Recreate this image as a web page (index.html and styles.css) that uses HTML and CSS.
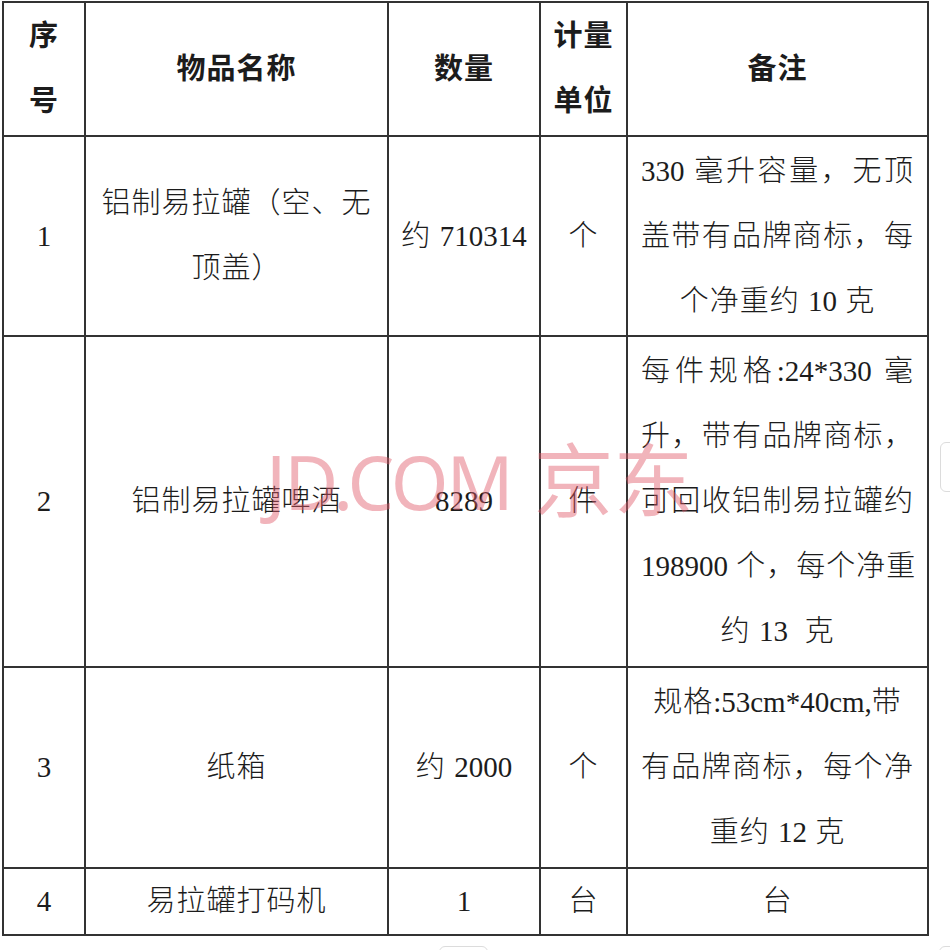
FILE: index.html
```html
<!DOCTYPE html>
<html lang="zh-CN">
<head>
<meta charset="utf-8">
<title>物品清单</title>
<link rel="stylesheet" href="styles.css">
</head>
<body>
<div class="page">
  <div class="tbl">
    <div class="c h"><div>序</div><div>号</div></div>
    <div class="c h">物品名称</div>
    <div class="c h">数量</div>
    <div class="c h"><div>计量</div><div>单位</div></div>
    <div class="c h">备注</div>

    <div class="c"><span class="n">1</span></div>
    <div class="c"><div>铝制易拉罐（空、无</div><div>顶盖）</div></div>
    <div class="c"><div>约 <span class="n">710314</span></div></div>
    <div class="c">个</div>
    <div class="c r">
      <div class="j"><span class="n">330</span> 毫升容量，无顶</div>
      <div class="j">盖带有品牌商标，每</div>
      <div class="m">个净重约 <span class="n">10</span> 克</div>
    </div>

    <div class="c"><span class="n">2</span></div>
    <div class="c">铝制易拉罐啤酒</div>
    <div class="c"><span class="n">8289</span></div>
    <div class="c">件</div>
    <div class="c r">
      <div class="j">每件规格<span class="n">:24*330</span> 毫</div>
      <div class="j">升，带有品牌商标，</div>
      <div class="j">可回收铝制易拉罐约</div>
      <div class="j"><span class="n">198900</span> 个，每个净重</div>
      <div class="m">约 <span class="n">13</span>&nbsp; 克</div>
    </div>

    <div class="c"><span class="n">3</span></div>
    <div class="c">纸箱</div>
    <div class="c"><div>约 <span class="n">2000</span></div></div>
    <div class="c">个</div>
    <div class="c r">
      <div class="m">规格<span class="n">:53cm*40cm,</span>带</div>
      <div class="j">有品牌商标，每个净</div>
      <div class="m">重约 <span class="n">12</span> 克</div>
    </div>

    <div class="c"><span class="n">4</span></div>
    <div class="c">易拉罐打码机</div>
    <div class="c"><span class="n">1</span></div>
    <div class="c">台</div>
    <div class="c">台</div>
  </div>

  <div class="wm"><span class="wm-en">JD.COM</span><span class="wm-cn">京东</span></div>
  <div class="tab tab-right"></div>
  <div class="tab tab-bottom"></div>
  <div class="tab tab-corner"></div>
</div>
</body>
</html>
```

FILE: styles.css
```css
html, body {
  margin: 0;
  padding: 0;
  background: #ffffff;
}

.page {
  position: relative;
  width: 950px;
  height: 950px;
  overflow: hidden;
  font-family: "Liberation Serif", "Noto Sans CJK SC", serif;
  font-size: 29px;
  font-weight: 300;
  letter-spacing: 1px;
  color: #1c1c1c;
}

.tbl {
  display: grid;
  grid-template-columns: 82px 303px 152px 87px 301px;
  grid-template-rows: 134px 200px 331px 201px 67px;
  margin: 1px 0 0 2px;
  width: max-content;
  border-left: 2px solid #333333;
  border-top: 2px solid #333333;
}

.c {
  box-sizing: border-box;
  border-right: 2px solid #333333;
  border-bottom: 2px solid #333333;
  display: flex;
  flex-direction: column;
  justify-content: center;
  align-items: center;
  text-align: center;
  line-height: 65px;
  white-space: nowrap;
}

.h {
  font-weight: 700;
}

.n {
  letter-spacing: 0;
}

.r {
  align-items: stretch;
  padding: 0 13px;
}

.j {
  text-align: justify;
  text-align-last: justify;
}

.m {
  text-align: center;
}

.wm {
  position: absolute;
  left: 266px;
  top: 435px;
  display: flex;
  align-items: baseline;
  color: rgba(225, 88, 104, 0.45);
  line-height: 1;
  pointer-events: none;
  white-space: nowrap;
}

.wm-en {
  font-family: "Noto Sans", sans-serif;
  font-size: 74px;
  font-weight: 400;
  letter-spacing: -2px;
}

.wm-cn {
  font-family: "Noto Sans CJK SC", sans-serif;
  font-size: 80px;
  font-weight: 400;
  margin-left: 22px;
  letter-spacing: 0;
}

.tab {
  position: absolute;
  box-sizing: border-box;
  border: 1.5px solid #dcdcdc;
  border-radius: 6px;
  background: #ffffff;
}

.tab-right {
  left: 940px;
  top: 442px;
  width: 24px;
  height: 50px;
}

.tab-bottom {
  left: 439px;
  top: 946px;
  width: 49px;
  height: 20px;
}

.tab-corner {
  left: 939px;
  top: 946px;
  width: 20px;
  height: 20px;
}
```
